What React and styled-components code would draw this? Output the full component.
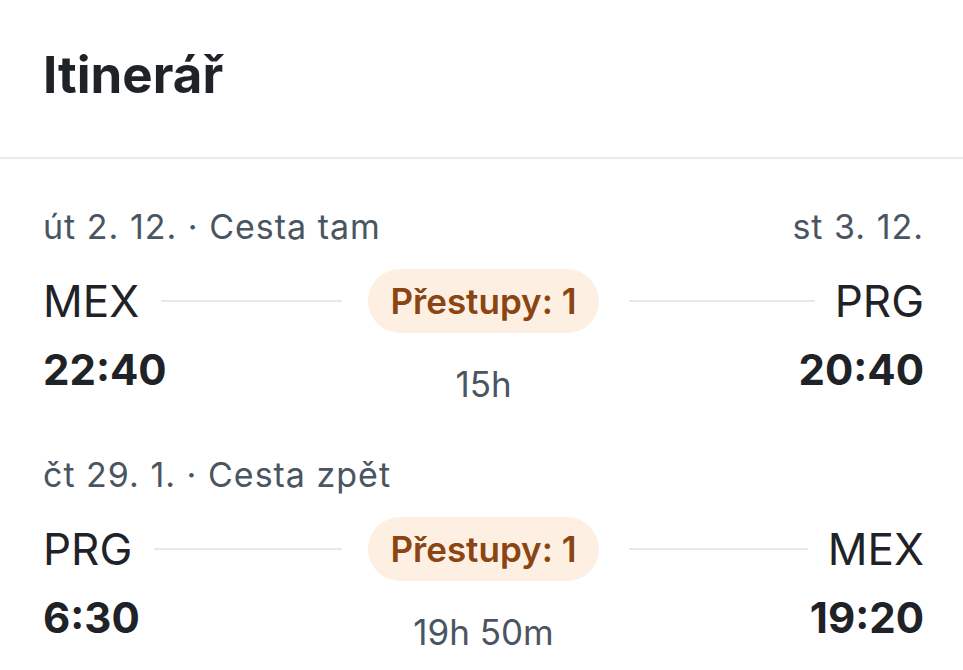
import React from 'react';
import styled, { createGlobalStyle } from 'styled-components';

const GlobalStyle = createGlobalStyle`
  html, body {
    margin: 0;
    padding: 0;
    background: #ffffff;
  }
  body {
    font-family: 'Inter', 'Noto Sans', sans-serif;
    color: #1f2328;
  }
`;

const Page = styled.div`
  width: 963px;
  height: 670px;
  overflow: hidden;
  background: #ffffff;
`;

const Header = styled.header`
  padding: 45px 39px 52px 43px;
  border-bottom: 2px solid #e8eaeb;
`;

const Title = styled.h1`
  margin: 0;
  font-size: 51px;
  line-height: 60px;
  font-weight: 700;
  color: #1f2328;
`;

const Body = styled.div`
  padding: 48px 39px 0 43px;
  display: flex;
  flex-direction: column;
  gap: 51px;
`;

const Leg = styled.section`
  display: flex;
  flex-direction: column;
`;

const DateRow = styled.div`
  display: flex;
  justify-content: space-between;
  font-size: 34px;
  line-height: 40px;
  letter-spacing: 1px;
  color: #4a5562;
  margin-bottom: 22px;
`;

const Row = styled.div`
  display: grid;
  grid-template-columns: 1fr auto 1fr;
  align-items: ${p => p.$align || 'center'};
  margin-top: ${p => p.$gap || 0}px;
`;

const Side = styled.div`
  display: flex;
  align-items: center;
  justify-content: ${p => (p.$right ? 'flex-end' : 'flex-start')};
  min-width: 0;
`;

const Code = styled.span`
  font-size: 44px;
  line-height: 64px;
  font-weight: 400;
  color: #1f2328;
`;

const Line = styled.div`
  flex: 1;
  height: 2px;
  background: #e6e9ec;
  margin: ${p => (p.$right ? '0 20px 0 30px' : '0 26px 0 22px')};
`;

const Badge = styled.div`
  height: 64px;
  padding: 0 23px;
  border-radius: 32px;
  background: #fdf0e3;
  color: #8a4512;
  font-size: 35px;
  font-weight: 600;
  display: flex;
  align-items: center;
`;

const Time = styled.span`
  font-size: 42px;
  line-height: 50px;
  font-weight: 700;
  color: #1f2328;
  text-align: ${p => (p.$right ? 'right' : 'left')};
`;

const Duration = styled.span`
  font-size: 35px;
  line-height: 40px;
  color: #4a5562;
  padding-top: 19px;
  text-align: center;
`;

const legs = [
  {
    date: 'út 2. 12. · Cesta tam',
    arrival: 'st 3. 12.',
    from: 'MEX',
    to: 'PRG',
    stops: 'Přestupy: 1',
    dep: '22:40',
    arr: '20:40',
    duration: '15h',
  },
  {
    date: 'čt 29. 1. · Cesta zpět',
    arrival: '',
    from: 'PRG',
    to: 'MEX',
    stops: 'Přestupy: 1',
    dep: '6:30',
    arr: '19:20',
    duration: '19h 50m',
  },
];

function LegBlock({ leg }) {
  return (
    <Leg>
      <DateRow>
        <span>{leg.date}</span>
        <span>{leg.arrival}</span>
      </DateRow>
      <Row>
        <Side>
          <Code>{leg.from}</Code>
          <Line />
        </Side>
        <Badge>{leg.stops}</Badge>
        <Side $right>
          <Line $right />
          <Code>{leg.to}</Code>
        </Side>
      </Row>
      <Row $align="start" $gap={12}>
        <Time>{leg.dep}</Time>
        <Duration>{leg.duration}</Duration>
        <Time $right>{leg.arr}</Time>
      </Row>
    </Leg>
  );
}

export default function App() {
  return (
    <Page>
      <GlobalStyle />
      <Header>
        <Title>Itinerář</Title>
      </Header>
      <Body>
        {legs.map(leg => (
          <LegBlock key={leg.date} leg={leg} />
        ))}
      </Body>
    </Page>
  );
}
